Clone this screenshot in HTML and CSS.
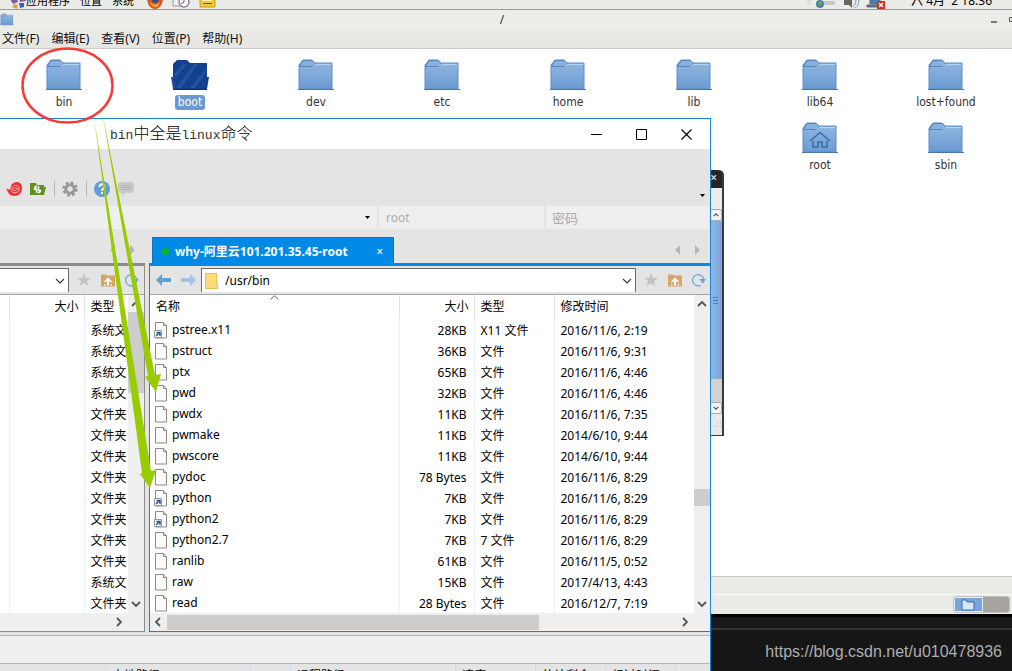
FILE: index.html
```html
<!DOCTYPE html>
<html lang="zh-CN">
<head>
<meta charset="utf-8">
<title>/</title>
<link rel="stylesheet" href="styles.css">
</head>
<body>
<svg class="defs" aria-hidden="true">
  <defs>
    <linearGradient id="blue" x1="0" y1="0" x2="0" y2="1"><stop offset="0" stop-color="#93b9e3"/><stop offset="1" stop-color="#6b9ad1"/></linearGradient>
    <symbol id="folder" viewBox="0 0 38 32">
      <path d="M2 30V6l4-5h9l3 3h17v26z" fill="url(#blue)" stroke="#5c8cc5"/>
      <path d="M2.500 7.500h13l3-3-3-3H6z" fill="#89b1df" stroke="#5585bf"/>
      <path d="M16 7.500l2-2h16" fill="none" stroke="#b9d2ee"/>
      <path d="M1 30.500h36" stroke="#4c74a8"/>
    </symbol>
    <symbol id="folder-open" viewBox="0 0 38 32">
      <path d="M2 30V5l4-4h10l3 3h17v14h2l-2 12z" fill="#12408c"/>
      <path d="M0 18h3l1 12H2z" fill="#1c4c98"/>
      <path d="M4 14L12 5h4L4 20zM5 29L23 5h4L10 29zM19 29L35 9v5L24 29z" fill="#2350a0"/>
      <path d="M2 30.500h34" stroke="#0a2c69"/>
    </symbol>
    <symbol id="file" viewBox="0 0 14 17">
      <path d="M1.500.5h8l3 3v12.500h-11z" fill="#fafbfa" stroke="#8b8b8b"/>
      <path d="M9.500.5v3h3" fill="#ddd" stroke="#8b8b8b"/>
    </symbol>
    <symbol id="link" viewBox="0 0 14 17">
      <use href="#file" width="14" height="17"/>
      <path d="M.5 8.500h7v7h-7z" fill="#fff" stroke="#999"/>
      <path d="M2 14l3-3M2.500 10.500H6V14" fill="none" stroke="#245a9c" stroke-width="1.500"/>
    </symbol>
    <symbol id="chev" viewBox="0 0 10 10"><path d="M1 3l4 4 4-4" fill="none" stroke="currentColor" stroke-width="1.800"/></symbol>
    <symbol id="thin" viewBox="0 0 10 10"><path d="M1 3l4 4 4-4" fill="none" stroke="currentColor" stroke-width="1.100"/></symbol>
    <symbol id="star" viewBox="0 0 14 14"><path d="M7 0l2 5h5l-4 3 1.500 5L7 10.300 2.500 13 4 8 0 5h5z" fill="#c3c3c3"/></symbol>
    <symbol id="home-up" viewBox="0 0 14 13"><path d="M0 1h5l1 1h8v11H0z" fill="#d5a56a"/><path d="M7 4l4 4-1 1-2-1.500V12H6V7.500L4 9 3 8zM3 10v2h2M11 10v2H9" fill="#fff"/></symbol>
    <symbol id="reload" viewBox="0 0 15 14"><path d="M9 12.800A6 6 0 1 1 12.500 6" fill="none" stroke="#6fa5d8" stroke-width="1.400"/><path d="M8 6h7l-3.500 5z" fill="#6fa5d8"/></symbol>
    <symbol id="back" viewBox="0 0 15 12"><path d="M0 6l6-6v4h9v4H6v4z" fill="currentColor"/></symbol>
  </defs>
</svg>

<main class="desktop">
  <div class="panel">
    <svg class="foot" viewBox="0 0 16 12"><path d="M0 2l6-2 2 5-5 2zM9 1l6-1 1 4-6 1z" fill="#7b5ea7"/><path d="M4 7l4 1-1 4-5-2z" fill="#d9a53a"/><path d="M9 6h5v4l-4 1z" fill="#3c5db0"/></svg>
    <span class="p1">应用程序</span><span class="p2">位置</span><span class="p3">系统</span>
    <svg class="fox" viewBox="0 0 16 12"><path d="M0 0h16c0 7-3 12-8 12S0 7 0 0z" fill="#d9541e"/><path d="M5 0h7c0 4-1 6-4 6S5 4 5 0z" fill="#2d4f8c"/><path d="M3 3c1 5 6 6 10 2-1 4-3 6-6 5S3 6 3 3z" fill="#f4a13a"/></svg>
    <svg class="mail" viewBox="0 0 18 12"><path d="M1 0h14v9H1z" fill="#eee" stroke="#999"/><circle cx="12" cy="5" r="5" fill="#fff" stroke="#9382a8" stroke-width="1.500"/><path d="M12 1v4l-3 2" fill="none" stroke="#555"/></svg>
    <svg class="note" viewBox="0 0 17 12"><path d="M1 0h15v10H1z" fill="#f2cb3d" stroke="#c89b12"/><path d="M3 0h8l2 4H3z" fill="#fbf0b8"/><path d="M4 6h9v1H4z" fill="#6b5320"/></svg>
    <svg class="tray" viewBox="0 0 80 12"><path d="M1 1v8M3 1v8" stroke="#bbb" stroke-dasharray="1 1"/><path d="M14 4h14v4H14z" fill="#c7c9c5"/><circle cx="13" cy="7" r="4" fill="#4d7ea3"/><path d="M11 5l4-1v3l-3 2z" fill="#76a744"/><path d="M37 3h5l3-3v11l-3-3h-5z" fill="#666"/><path d="M48 1c2 4 0 7-2 9M51 1c2 4 0 8-3 10" fill="none" stroke="#739dcd"/><path d="M63 0h10v7H63zM60 8h13v2H60z" fill="#477cb5" stroke="#666"/><path d="M70 4h8v8h-8z" fill="#d32d13"/><path d="M72 6l4 4m0-4l-4 4" stroke="#fff" stroke-width="1.500"/></svg>
    <span class="clock">六 4月&nbsp; 2 18:36</span>
  </div>
  <header class="titlebar">
    <svg class="mini"><use href="#folder"/></svg><h1>/</h1>
    <svg class="ctl" viewBox="0 0 22 10"><path d="M1 7h6" stroke="#555" stroke-width="1.500"/><path d="M19.500 2.500h5v4h-5z" fill="none" stroke="#555"/></svg>
  </header>
  <nav class="menubar"><button>文件(F)</button><button>编辑(E)</button><button>查看(V)</button><button>位置(P)</button><button>帮助(H)</button></nav>
  <section class="icons">
    <figure><svg><use href="#folder"/></svg><figcaption>bin</figcaption></figure>
    <figure class="sel"><svg><use href="#folder-open"/></svg><figcaption>boot</figcaption></figure>
    <figure><svg><use href="#folder"/></svg><figcaption>dev</figcaption></figure>
    <figure><svg><use href="#folder"/></svg><figcaption>etc</figcaption></figure>
    <figure><svg><use href="#folder"/></svg><figcaption>home</figcaption></figure>
    <figure><svg><use href="#folder"/></svg><figcaption>lib</figcaption></figure>
    <figure><svg><use href="#folder"/></svg><figcaption>lib64</figcaption></figure>
    <figure><svg><use href="#folder"/></svg><figcaption>lost+found</figcaption></figure>
    <figure class="c7"><svg viewBox="0 0 38 32"><use href="#folder"/><path d="M9 19L19 10.500 29 19M12 19v6h5v-5h4v5h5v-6" fill="none" stroke="#3a6cab" stroke-width="1.500"/></svg><figcaption>root</figcaption></figure>
    <figure><svg><use href="#folder"/></svg><figcaption>sbin</figcaption></figure>
  </section>
  <div class="status"></div>
  <div class="taskbar"><div class="switcher"><span class="ws on"><svg viewBox="0 0 14 12"><path d="M1 1h4l1 2h7v8H1z" fill="#d6e7f8" stroke="#3c6aa5"/></svg></span><span class="ws"></span></div></div>
  <footer class="dark"><p>https://blog.csdn.net/u010478936</p></footer>
</main>

<aside class="behind">
  <div class="bt">×</div><div class="bm"></div>
  <div class="bs"><span class="bb"><svg class="up"><use href="#chev"/></svg></span><span class="bth"><svg viewBox="0 0 6 7"><path d="M0 .5h5M0 3.500h5M0 6.500h5" stroke="#4a7cbf"/></svg></span><span class="btr"></span><span class="bb"><svg><use href="#chev"/></svg></span></div>
  <div class="bg"><svg viewBox="0 0 9 9"><path d="M7.500 0v9M4.500 3v6M1.500 6v3" stroke="#bbb" stroke-dasharray="1 2"/></svg></div>
</aside>

<section class="win">
  <header class="wtitle">
    <h2><span>bin</span>中全是<span>linux</span>命令</h2>
    <div class="wctl">
      <button aria-label="最小化"><svg viewBox="0 0 11 11"><path d="M0 5.500h11" stroke="#000"/></svg></button>
      <button aria-label="最大化"><svg viewBox="0 0 11 11"><path d="M.5.500h10v10H.5z" fill="none" stroke="#000"/></svg></button>
      <button aria-label="关闭"><svg viewBox="0 0 11 11"><path d="M.5.500l10 10m0-10l-10 10" stroke="#000" stroke-width="1.200"/></svg></button>
    </div>
  </header>
  <div class="tools">
    <button aria-label="Xshell"><svg viewBox="0 0 16 16"><path d="M0 7c2 2 5 2 5-1C5 2 9 1 12 1c3 1 4 3 4 6 0 5-3 8-8 8-4 0-6-3-8-8z" fill="#f03434"/><path d="M5 8c0 5 8 5 8 0 0-4-5-5-6-1.500-1 3 3 4 4 1.500 0-1-1-2-2-1" fill="none" stroke="#e9c4c4"/></svg></button>
    <button aria-label="传输"><svg viewBox="0 0 16 16"><path d="M0 2h6l1 2h7v2h2l-2 8H0z" fill="#5f9312"/><path d="M6.500 12V8h-2c0-1 1-2.500 2.500-3M8.500 5v4.500h2c0 1-1 2-2.500 2.500" fill="none" stroke="#fff" stroke-width="1.500"/></svg></button>
    <i></i>
    <button aria-label="设置"><svg viewBox="0 0 16 16"><circle cx="8" cy="8" r="6.300" fill="none" stroke="#8f8f8f" stroke-width="2.600" stroke-dasharray="2.500 2.450"/><circle cx="8" cy="8" r="4.200" fill="none" stroke="#999" stroke-width="3"/></svg></button>
    <i></i>
    <button aria-label="帮助"><svg viewBox="0 0 16 16"><circle cx="8" cy="8" r="8" fill="#659bd4"/><path d="M5.500 6c0-3.500 5-3.500 5-.5C10.500 7.500 8 7.500 8 10M8 11v2" fill="none" stroke="#fff" stroke-width="2"/></svg></button>
    <button aria-label="反馈"><svg viewBox="0 0 16 16"><path d="M2 1h12l2 2v7l-2 2H7l-3 3v-3H2l-2-2V3z" fill="#c9c9c9"/><path d="M3 4.500h10M3 6.500h10M3 8.500h10" stroke="#b3b3b3"/></svg></button>
    <svg class="caret" viewBox="0 0 5 3"><path d="M0 0h5L2.500 3z"/></svg>
  </div>
  <form class="quick">
    <div class="host"><svg class="caret" viewBox="0 0 5 3"><path d="M0 0h5L2.500 3z"/></svg></div>
    <input class="user" aria-label="用户名" placeholder="root"><input class="pass" aria-label="密码" placeholder="密码">
  </form>
  <div class="panes">
    <section class="pane left">
      <div class="tabs"><span class="tri"><svg viewBox="0 0 5 10"><path d="M5 0v10L0 5z"/></svg><svg viewBox="0 0 5 10"><path d="M0 0v10l5-5z"/></svg></span></div>
      <div class="body">
        <div class="addr"><div class="path"><input aria-label="本地路径"><svg class="dd"><use href="#thin"/></svg></div><svg class="ai"><use href="#star"/></svg><svg class="ai"><use href="#home-up"/></svg><svg class="ai"><use href="#reload"/></svg></div>
        <div class="list">
          <table><colgroup><col class="l1"><col class="l2"><col></colgroup>
            <thead><tr><th></th><th class="r">大小</th><th>类型</th></tr></thead>
            <tbody>
            <tr><td></td><td></td><td>系统文</td></tr><tr><td></td><td></td><td>系统文</td></tr><tr><td></td><td></td><td>系统文</td></tr><tr><td></td><td></td><td>系统文</td></tr>
            <tr><td></td><td></td><td>文件夹</td></tr><tr><td></td><td></td><td>文件夹</td></tr><tr><td></td><td></td><td>文件夹</td></tr><tr><td></td><td></td><td>文件夹</td></tr><tr><td></td><td></td><td>文件夹</td></tr><tr><td></td><td></td><td>文件夹</td></tr><tr><td></td><td></td><td>文件夹</td></tr><tr><td></td><td></td><td>文件夹</td></tr>
            <tr><td></td><td></td><td>系统文</td></tr><tr><td></td><td></td><td>文件夹</td></tr>
            </tbody></table>
          <div class="vs"><svg class="up"><use href="#chev"/></svg><span class="thumb tl"></span><svg class="end"><use href="#chev"/></svg></div>
        </div>
        <div class="hs"><svg class="rt"><use href="#chev"/></svg></div>
      </div>
    </section>
    <section class="pane right">
      <div class="tabs"><button class="tab"><b class="dot"></b><span>why-阿里云101.201.35.45-root</span><em>×</em></button><span class="tri"><svg viewBox="0 0 5 10"><path d="M5 0v10L0 5z"/></svg><svg viewBox="0 0 5 10"><path d="M0 0v10l5-5z"/></svg></span></div>
      <div class="body">
        <div class="addr"><svg class="nav"><use href="#back"/></svg><svg class="nav fwd"><use href="#back"/></svg><div class="path"><svg class="pf" viewBox="0 0 13 16"><path d="M0 0h12v10h1v6H0z" fill="#fbdc7d"/><path d="M.5.500h11v10h1v5H.5z" fill="none" stroke="#e8c04f"/></svg><input aria-label="远程路径" value="/usr/bin"><svg class="dd"><use href="#thin"/></svg></div><svg class="ai"><use href="#star"/></svg><svg class="ai"><use href="#home-up"/></svg><svg class="ai"><use href="#reload"/></svg></div>
        <div class="list">
          <table><colgroup><col><col class="c2"><col class="c3"><col class="c4"></colgroup>
            <thead><tr><th class="sort">名称<svg><use href="#thin"/></svg></th><th class="r">大小</th><th>类型</th><th>修改时间</th></tr></thead>
            <tbody>
            <tr><td><svg><use href="#link"/></svg>pstree.x11</td><td>28KB</td><td>X11 文件</td><td>2016/11/6, 2:19</td></tr>
            <tr><td><svg><use href="#file"/></svg>pstruct</td><td>36KB</td><td>文件</td><td>2016/11/6, 9:31</td></tr>
            <tr><td><svg><use href="#file"/></svg>ptx</td><td>65KB</td><td>文件</td><td>2016/11/6, 4:46</td></tr>
            <tr><td><svg><use href="#file"/></svg>pwd</td><td>32KB</td><td>文件</td><td>2016/11/6, 4:46</td></tr>
            <tr><td><svg><use href="#file"/></svg>pwdx</td><td>11KB</td><td>文件</td><td>2016/11/6, 7:35</td></tr>
            <tr><td><svg><use href="#file"/></svg>pwmake</td><td>11KB</td><td>文件</td><td>2014/6/10, 9:44</td></tr>
            <tr><td><svg><use href="#file"/></svg>pwscore</td><td>11KB</td><td>文件</td><td>2014/6/10, 9:44</td></tr>
            <tr><td><svg><use href="#file"/></svg>pydoc</td><td>78 Bytes</td><td>文件</td><td>2016/11/6, 8:29</td></tr>
            <tr><td><svg><use href="#link"/></svg>python</td><td>7KB</td><td>文件</td><td>2016/11/6, 8:29</td></tr>
            <tr><td><svg><use href="#link"/></svg>python2</td><td>7KB</td><td>文件</td><td>2016/11/6, 8:29</td></tr>
            <tr><td><svg><use href="#file"/></svg>python2.7</td><td>7KB</td><td>7 文件</td><td>2016/11/6, 8:29</td></tr>
            <tr><td><svg><use href="#file"/></svg>ranlib</td><td>61KB</td><td>文件</td><td>2016/11/5, 0:52</td></tr>
            <tr><td><svg><use href="#file"/></svg>raw</td><td>15KB</td><td>文件</td><td>2017/4/13, 4:43</td></tr>
            <tr><td><svg><use href="#file"/></svg>read</td><td>28 Bytes</td><td>文件</td><td>2016/12/7, 7:19</td></tr>
            </tbody></table>
          <div class="vs"><svg class="up"><use href="#chev"/></svg><span class="thumb tr"></span><svg class="end"><use href="#chev"/></svg></div>
        </div>
        <div class="hs"><svg class="lt"><use href="#chev"/></svg><span class="hthumb"></span><svg class="rt"><use href="#chev"/></svg></div>
      </div>
    </section>
  </div>
  <div class="gapbar"></div>
  <div class="queue"><span class="q1"></span><span class="q2">本地路径</span><span class="q3"></span><span class="q4">远程路径</span><span class="q5">速度</span><span class="q6">估计剩余</span><span class="q6">经过时间</span><span></span></div>
</section>

<svg class="marks" viewBox="0 0 170 500" aria-hidden="true">
  <ellipse cx="67.500" cy="85.500" rx="45" ry="37" fill="none" stroke="#f93a3a" stroke-width="2.500"/>
  <path d="M94 118l48 355-2 1 10 14 6-18-5 1zM102 112l46 264-3 1 11 15 5-18-6 1z" fill="#99cc00"/>
</svg>
</body>
</html>
```

FILE: styles.css
```css
* { box-sizing: border-box; }
body { margin: 0; height: 100vh; overflow: hidden; position: relative; background: #fff; color: #000; font: 12px/16px "Noto Sans", "Noto Sans CJK SC", sans-serif; }
button, input { font: inherit; color: inherit; border: 0; background: none; padding: 0; margin: 0; min-width: 0; }
svg { display: block; flex: none; }
h1, h2, p, figure { margin: 0; font-weight: normal; }
.defs { position: absolute; width: 0; height: 0; }

/* desktop file manager */
.desktop { height: 100%; display: flex; flex-direction: column; }
.panel { height: 10px; flex: none; display: flex; align-items: flex-end; overflow: hidden; background: #ebebe7; border-bottom: 1px solid #999; white-space: nowrap; line-height: 16px; }
.panel svg { height: 12px; align-self: flex-end; }
.panel .foot { width: 16px; margin-left: 10px; }
.p1, .p2, .p3 { font-size: 11px; margin-right: 10px; }
.foot { margin-right: 0; }
.fox { width: 16px; margin-left: 3px; }
.mail { width: 18px; margin-left: 9px; }
.note { width: 17px; margin-left: 9px; }
.tray { width: 80px; margin-left: auto; }
.clock { margin: 0 20px 0 24px; }
.titlebar { height: 19px; flex: none; display: flex; align-items: center; background: #ecece8; }
.mini { width: 14px; height: 13px; }
.titlebar h1 { flex: 1; text-align: center; font-size: 12px; line-height: 16px; color: #333; }
.ctl { width: 22px; height: 10px; }
.menubar { height: 20px; flex: none; display: flex; gap: 12px; padding: 0 2px; background: linear-gradient(#ebebe7, #e5e5e1); border-bottom: 1px solid #cbcbc7; color: #111; font-size: 12px; }
.icons { flex: 1; display: grid; grid-template-columns: repeat(8, 126px); grid-auto-rows: 63px; padding: 10px 0 0 1px; align-content: start; font: 12px/15px "DejaVu Sans Condensed", "DejaVu Sans", sans-serif; color: #333; }
figure { display: flex; flex-direction: column; align-items: center; gap: 4px; }
figure svg { width: 38px; height: 32px; }
figcaption { padding: 0 3px; }
.sel figcaption { background: #6b9ad1; color: #fff; border-radius: 3px; }
.c7 { grid-column: 7; }
.status { height: 18px; flex: none; background: #ebebe6; border-top: 1px solid #c8c8c0; }
.taskbar { height: 20px; flex: none; display: flex; justify-content: flex-end; background: #ebebe6; border-top: 1px solid #fff; padding: 1px 2px; }
.switcher { display: flex; width: 57px; border: 1px solid #c5c3bd; border-radius: 3px; overflow: hidden; }
.ws { flex: 1; background: #a7a39e; display: flex; align-items: center; justify-content: center; }
.ws.on { background: #77a5dc; border: 1px solid #e4edf6; }
.ws svg { width: 14px; height: 12px; }
.dark { height: 57px; flex: none; background: linear-gradient(#000 3px, #19191a 3px 14px, #343435 14px 16px, #161617 16px); padding: 28px 10px 0; text-align: right; font: 16px/20px "Liberation Sans", sans-serif; color: #aeaeae; }

/* window partly covered by the transfer window */
.behind { position: absolute; left: 690px; top: 170px; width: 34px; height: 266px; display: flex; flex-direction: column; border: solid #3b3b3b; border-width: 0 2px 1px 1px; border-radius: 5px 5px 0 0; background: #e8e8e4; }
.bt { height: 18px; background: #252525; color: #ccc; border-radius: 4px 4px 0 0; text-align: right; padding-right: 5px; font-weight: bold; }
.bm { height: 21px; background: #ededea; }
.bs { flex: 1; width: 12px; align-self: flex-end; display: flex; flex-direction: column; background: #d3d2cd; }
.bb { height: 12px; background: #f2f2ef; border: 1px solid #aaa; border-radius: 2px; display: flex; justify-content: center; align-items: center; color: #555; }
.bb svg { width: 6px; height: 6px; }
.bth { height: 158px; background: linear-gradient(90deg, #94b8e6, #7ba5dc); display: flex; align-items: center; justify-content: center; }
.bth svg { width: 6px; height: 7px; }
.btr { flex: 1; }
.bg { height: 21px; display: flex; align-items: center; justify-content: flex-end; }
.bg svg { width: 9px; height: 9px; }

/* transfer window */
.win { position: absolute; left: 0; top: 118px; bottom: 0; width: 711px; display: flex; flex-direction: column; overflow: hidden; border: solid #1784d4; border-width: 1px 1px 0 0; background: #e4e4e4; }
.wtitle { height: 30px; flex: none; background: #fff; display: flex; align-items: center; justify-content: space-between; padding: 0 1px 0 110px; }
h2 { font: 300 16px/24px "Noto Sans CJK SC", sans-serif; }
h2 span { font: 13px/24px "Liberation Mono", monospace; color: #333; }
.wctl { display: flex; }
.wctl button { width: 45px; height: 28px; display: flex; align-items: center; justify-content: center; }
.wctl svg { width: 11px; height: 11px; }
.tools { height: 57px; flex: none; display: flex; align-items: flex-end; gap: 8px; padding: 0 5px 9px 6px; }
.tools button svg { width: 16px; height: 16px; }
.tools i { width: 1px; height: 16px; background: #bbb; margin-right: -1px; }
.caret { width: 5px; height: 3px; margin-left: auto; }
.tools .caret { align-self: center; margin-top: 44px; }
.quick { height: 23px; flex: none; display: flex; gap: 2px; color: #aaa; padding-right: 1px; }
.quick input, .host { background: #efefef; }
.quick input::placeholder { color: #aaa; opacity: 1; }
.host { width: 377px; display: flex; align-items: center; padding-right: 7px; color: #000; }
.user { width: 165px; padding-left: 7px; }
.quick .pass { flex: 1; padding-left: 6px; font-size: 13px; }
.panes { flex: none; display: flex; gap: 4px; }
.pane { display: flex; flex-direction: column; }
.left { width: 145px; }
.right { flex: 1; min-width: 0; }
.tabs { height: 34px; display: flex; align-items: flex-end; justify-content: space-between; padding: 0 10px 0 3px; }
.tab { width: 242px; height: 26px; background: #008ae6; color: #fff; font-weight: bold; display: flex; align-items: center; padding: 2px 10px 0 9px; gap: 6px; border: solid #1174bd; border-width: 1px 1px 0; }
.tab span { flex: 1; text-align: left; white-space: nowrap; }
.tab em { font-style: normal; font-weight: normal; }
.dot { width: 7px; height: 7px; border-radius: 50%; background: #0bb51d; }
.tri { display: flex; gap: 15px; margin-left: auto; padding-bottom: 8px; fill: #b5b5b5; }
.tri svg { width: 5px; height: 10px; }
.body { display: flex; flex-direction: column; border: solid #008ae6; border-width: 3px 0 1px 1px; background: #e4e4e4; }
.left .body { border-color: #8d8d8d; border-width: 3px 1px 1px 0; }
.addr { height: 29px; display: flex; align-items: center; border-bottom: 1px solid #a5a5a5; padding: 0 4px 0 6px; gap: 10px; }
.left .addr { padding: 0 5px 0 0; }
.path { flex: 1; min-width: 0; height: 24px; display: flex; align-items: center; background: #fff; border: solid #6b6b6b; border-width: 1px 1px 0; padding: 0 3px; margin-right: -2px; }
.left .path { border-left: 0; }
.path input { flex: 1; padding-left: 7px; font-size: 12px; width: 0; }
.pf { width: 13px; height: 16px; }
.dd { width: 10px; height: 10px; color: #333; }
.nav { width: 15px; height: 12px; color: #619fd6; }
.fwd { color: #a2c2df; margin-right: -5px; transform: scaleX(-1); }
.ai { width: 14px; height: 14px; }
.list { display: flex; background: #fff; }
table { flex: 1; min-width: 0; border-collapse: collapse; table-layout: fixed; width: 0; }
.l1 { width: 9px; }
.l2 { width: 75px; }
.c2 { width: 75px; }
.c3 { width: 80px; }
.c4 { width: 140px; }
th { height: 24px; font-weight: normal; text-align: left; padding: 0 6px; border-left: 1px solid #e2e2e2; white-space: nowrap; }
td { height: 21px; padding: 2px 6px 0; border-left: 1px solid #e8f0fa; white-space: nowrap; overflow: hidden; }
th:first-child, td:first-child { border-left: 0; }
.left th, .left td { padding-left: 6px; padding-right: 0; }
.list th.r { text-align: right; padding-right: 5px; }
.right td:nth-child(2) { text-align: right; padding-right: 7px; }
td:first-child svg { display: inline-block; width: 14px; height: 17px; vertical-align: middle; margin: 0 4px 0 -2px; }
.sort { position: relative; }
.sort svg { position: absolute; top: -2px; left: calc(50% - 4px); width: 9px; height: 9px; transform: rotate(180deg); color: #555; }
.vs { width: 16px; display: flex; flex-direction: column; align-items: center; background: #efefef; color: #555; padding: 4px 0; }
.vs svg, .hs svg { width: 10px; height: 10px; }
.up { transform: rotate(180deg); }
.thumb { width: 16px; background: #cdcdcd; }
.tl { height: 81px; margin-top: 3px; }
.tr { height: 17px; margin-top: 180px; }
.end { margin-top: auto; }
.hs { height: 18px; display: flex; align-items: center; background: #efefef; color: #555; padding: 0 20px 0 3px; gap: 4px; }
.hs .lt { transform: rotate(90deg); }
.hs .rt { transform: rotate(-90deg); margin-left: auto; }
.hthumb { width: 372px; height: 15px; background: #cdcdcd; }
.gapbar { height: 29px; flex: none; margin-top: 3px; background: #efefef; border: solid #b5b5b5; border-width: 1px 0; }
.queue { flex: 1; min-height: 8px; display: flex; overflow: hidden; }
.queue span { border-right: 1px solid #cfdbea; padding: 4px 6px 0; white-space: nowrap; height: 24px; }
.queue span:last-child { border: 0; }
.q1 { width: 106px; }
.q2 { width: 145px; }
.q3 { width: 40px; }
.q4 { width: 165px; }
.q5 { width: 80px; }
.q6 { width: 70px; }

/* annotations over everything */
.marks { position: absolute; left: 0; top: 0; width: 170px; height: 500px; pointer-events: none; }
```
